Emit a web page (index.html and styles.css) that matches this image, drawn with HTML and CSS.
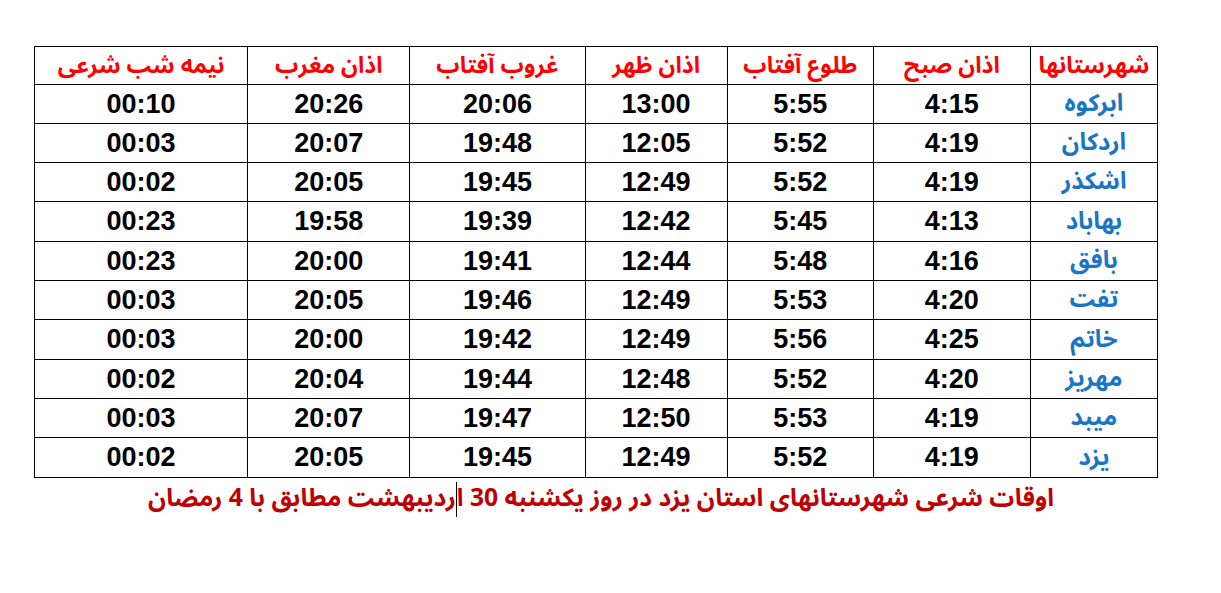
FILE: index.html
```html
<!DOCTYPE html>
<html lang="fa">
<head>
<meta charset="utf-8">
<title>اوقات شرعی</title>
<link rel="stylesheet" href="styles.css">
</head>
<body>
<div class="sheet">
  <table class="times" dir="rtl">
    <colgroup>
      <col class="c1"><col class="c2"><col class="c3"><col class="c4"><col class="c5"><col class="c6"><col class="c7">
    </colgroup>
    <thead>
      <tr>
        <th>شهرستانها</th><th>اذان صبح</th><th>طلوع آفتاب</th><th>اذان ظهر</th><th>غروب آفتاب</th><th>اذان مغرب</th><th>نیمه شب شرعی</th>
      </tr>
    </thead>
    <tbody>
      <tr><td class="city">ابرکوه</td><td>4:15</td><td>5:55</td><td>13:00</td><td>20:06</td><td>20:26</td><td>00:10</td></tr>
      <tr><td class="city">اردکان</td><td>4:19</td><td>5:52</td><td>12:05</td><td>19:48</td><td>20:07</td><td>00:03</td></tr>
      <tr><td class="city">اشکذر</td><td>4:19</td><td>5:52</td><td>12:49</td><td>19:45</td><td>20:05</td><td>00:02</td></tr>
      <tr class="tall"><td class="city">بهاباد</td><td>4:13</td><td>5:45</td><td>12:42</td><td>19:39</td><td>19:58</td><td>00:23</td></tr>
      <tr><td class="city">بافق</td><td>4:16</td><td>5:48</td><td>12:44</td><td>19:41</td><td>20:00</td><td>00:23</td></tr>
      <tr><td class="city">تفت</td><td>4:20</td><td>5:53</td><td>12:49</td><td>19:46</td><td>20:05</td><td>00:03</td></tr>
      <tr class="tall"><td class="city">خاتم</td><td>4:25</td><td>5:56</td><td>12:49</td><td>19:42</td><td>20:00</td><td>00:03</td></tr>
      <tr><td class="city">مهریز</td><td>4:20</td><td>5:52</td><td>12:48</td><td>19:44</td><td>20:04</td><td>00:02</td></tr>
      <tr><td class="city">میبد</td><td>4:19</td><td>5:53</td><td>12:50</td><td>19:47</td><td>20:07</td><td>00:03</td></tr>
      <tr class="tall"><td class="city">یزد</td><td>4:19</td><td>5:52</td><td>12:49</td><td>19:45</td><td>20:05</td><td>00:02</td></tr>
    </tbody>
  </table>
  <p class="caption" dir="rtl">اوقات شرعی شهرستانهای استان یزد در روز یکشنبه 30 ا<span class="caret"></span>ردیبهشت مطابق با 4 رمضان</p>
</div>
</body>
</html>
```
FILE: styles.css
```css
html, body {
  margin: 0;
  padding: 0;
  background: #ffffff;
}

.sheet {
  padding: 46px 0 0 34px;
  width: 1124px;
}

.times {
  border-collapse: collapse;
  table-layout: fixed;
  width: 1124px;
}

.c1 { width: 127px; }
.c2 { width: 157px; }
.c3 { width: 146px; }
.c4 { width: 142px; }
.c5 { width: 175px; }
.c6 { width: 162px; }
.c7 { width: 213px; }

.times th,
.times td {
  border: 1px solid #000000;
  padding: 0;
  text-align: center;
  vertical-align: middle;
}

.times th {
  height: 37px;
  color: #ff0000;
  font-family: "Noto Sans Arabic", "Noto Naskh Arabic", "DejaVu Sans", sans-serif;
  font-weight: bold;
  font-size: 23px;
  line-height: 30px;
}

.times td {
  height: 38px;
  color: #000000;
  font-family: "Liberation Sans", Arial, sans-serif;
  font-weight: bold;
  font-size: 27px;
}

.times tr.tall td {
  height: 39px;
}

.times td.city {
  color: #1a76c4;
  font-family: "Noto Sans Arabic", "Noto Naskh Arabic", "DejaVu Sans", sans-serif;
  font-size: 24px;
  line-height: 30px;
}

.caption {
  margin: 2px 0 0 0;
  padding-left: 10px;
  width: 1114px;
  text-align: center;
  color: #c00000;
  font-family: "Noto Sans Arabic", "Noto Naskh Arabic", "DejaVu Sans", sans-serif;
  font-weight: bold;
  font-size: 24.7px;
  line-height: 36px;
}

.caption .caret {
  display: inline-block;
  width: 0;
  height: 35px;
  border-left: 1px solid #000000;
  vertical-align: middle;
}
```
